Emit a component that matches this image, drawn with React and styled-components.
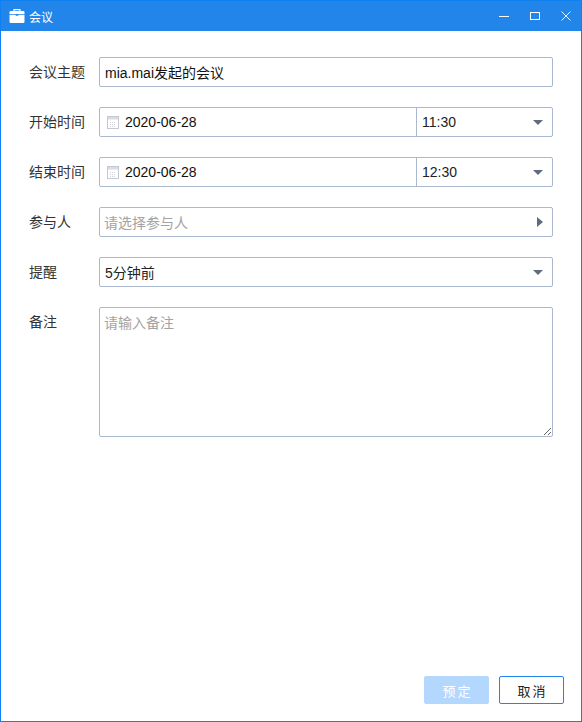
import React from "react";
import styled, { createGlobalStyle } from "styled-components";

const Global = createGlobalStyle`
  html, body { margin: 0; padding: 0; background: #fff; }
  * { box-sizing: border-box; }
  body { font-family: "Liberation Sans", "Noto Sans CJK SC", sans-serif; font-size: 14px; color: #222; }
  ::placeholder { color: #a3a3a3; opacity: 1; }
`;

const Win = styled.div`
  width: 582px; height: 722px; display: flex; flex-direction: column;
  border: 1px solid #0f80f0; background: #fff;
`;
const TitleBar = styled.header`
  height: 30px; flex: none; background: #2285ea; color: #fff;
  display: flex; align-items: center; padding-left: 8px;
`;
const TitleText = styled.span`font-size: 12px; margin-left: 4px; flex: 1;`;
const WinControls = styled.div`display: flex; align-items: center;`;
const WinBtn = styled.button`
  width: 31px; height: 30px; padding: 0; border: 0; background: none; color: #fff;
  display: flex; align-items: center; justify-content: center;
`;
const Form = styled.main`
  flex: 1; display: flex; flex-direction: column; gap: 20px; padding: 26px 28px 0 28px;
`;
const Row = styled.div`display: flex; align-items: ${p => (p.$top ? "flex-start" : "center")};`;
const Label = styled.label`
  width: 70px; flex: none; font-size: 14px; color: #333; line-height: 30px;
`;
const Field = styled.div`
  flex: 1; height: 30px; display: flex; align-items: center;
  border: 1px solid #aab8d0; border-radius: 2px; background: #fff;
`;
const Input = styled.input`
  flex: 1; min-width: 0; height: 100%; border: 0; outline: 0; padding: 0 5px; background: none;
  font: inherit; font-size: 14px; color: #111;
`;
const DatePart = styled.div`
  width: 317px; flex: none; height: 100%; display: flex; align-items: center; padding-left: 7px; gap: 6px;
  border-right: 1px solid #aab8d0;
`;
const DateValue = styled.span`font-size: 14px; color: #111;`;
const SelectPart = styled.div`
  flex: 1; height: 100%; display: flex; align-items: center; justify-content: space-between;
  padding: 0 9px 0 5px; font-size: 14px; color: #222;
`;
const Placeholder = styled.span`font-size: 14px; color: #a3a3a3; margin-left: -1px;`;
const CaretDown = styled.i`
  width: 0; height: 0; border-left: 5.5px solid transparent; border-right: 5.5px solid transparent;
  border-top: 5px solid #5f6b80;
`;
const CaretRight = styled.i`
  width: 0; height: 0; border-top: 5px solid transparent; border-bottom: 5px solid transparent;
  border-left: 6px solid #5f6b80;
`;
const Note = styled.textarea`
  flex: 1; height: 130px; display: block; resize: both; outline: 0;
  border: 1px solid #aab8d0; border-radius: 2px; padding: 5px 4px;
  font: inherit; font-size: 14px; color: #111; line-height: 20px;
`;
const Footer = styled.footer`
  flex: none; display: flex; justify-content: flex-end; gap: 10px; padding: 0 17px 17px 0;
`;
const Btn = styled.button`
  width: 65px; height: 28px; padding: 0 0 0 2px; border-radius: 2px; font: inherit; font-size: 13px; letter-spacing: 2px;
  border: 1px solid ${p => (p.$primary ? "#b3d7fd" : "#2285ea")};
  background: ${p => (p.$primary ? "#b3d7fd" : "#fff")};
  color: ${p => (p.$primary ? "#fff" : "#222")};
`;

const Briefcase = () => (
  <svg width="16" height="14" viewBox="0 0 16 14">
    <path d="M5 2V0.6h6V2" fill="none" stroke="#fff" strokeWidth="1.2" />
    <path d="M0.5 3.2A1.2 1.2 0 0 1 1.7 2h12.6a1.2 1.2 0 0 1 1.2 1.2V5H0.5z" fill="#fff" />
    <path d="M0.5 5.8h6.2v1h2.6v-1h6.2v7a1.2 1.2 0 0 1-1.2 1.2H1.7a1.2 1.2 0 0 1-1.2-1.2z" fill="#fff" />
  </svg>
);
const Calendar = () => (
  <svg width="12" height="13" viewBox="0 0 12 13">
    <rect x="0.5" y="0.5" width="11" height="12" fill="#fff" stroke="#c4c8d0" />
    <rect x="1" y="1" width="10" height="2.5" fill="#d9dce2" />
    <path d="M3 6.5h6M3 8.5h6M3 10.5h6" stroke="#cfd2d9" strokeDasharray="1 1" />
  </svg>
);

const DateTime = ({ date, time }) => (
  <Field>
    <DatePart><Calendar /><DateValue>{date}</DateValue></DatePart>
    <SelectPart>{time}<CaretDown /></SelectPart>
  </Field>
);

export default function App() {
  return (
    <>
      <Global />
      <Win>
        <TitleBar>
          <Briefcase />
          <TitleText>会议</TitleText>
          <WinControls>
            <WinBtn aria-label="最小化">
              <svg width="10" height="10" viewBox="0 0 10 10"><path d="M0 5.5h10" stroke="#fff" /></svg>
            </WinBtn>
            <WinBtn aria-label="最大化">
              <svg width="10" height="10" viewBox="0 0 10 10"><rect x="0.5" y="1.5" width="9" height="7" fill="none" stroke="#fff" /></svg>
            </WinBtn>
            <WinBtn aria-label="关闭">
              <svg width="10" height="10" viewBox="0 0 10 10"><path d="M0.5 0.5l9 9M9.5 0.5l-9 9" stroke="#fff" strokeWidth="0.9" /></svg>
            </WinBtn>
          </WinControls>
        </TitleBar>
        <Form>
          <Row><Label>会议主题</Label><Field><Input readOnly value="mia.mai发起的会议" /></Field></Row>
          <Row><Label>开始时间</Label><DateTime date="2020-06-28" time="11:30" /></Row>
          <Row><Label>结束时间</Label><DateTime date="2020-06-28" time="12:30" /></Row>
          <Row><Label>参与人</Label><Field><SelectPart><Placeholder>请选择参与人</Placeholder><CaretRight /></SelectPart></Field></Row>
          <Row><Label>提醒</Label><Field><SelectPart>5分钟前<CaretDown /></SelectPart></Field></Row>
          <Row $top><Label>备注</Label><Note placeholder="请输入备注" /></Row>
        </Form>
        <Footer>
          <Btn $primary disabled>预定</Btn>
          <Btn>取消</Btn>
        </Footer>
      </Win>
    </>
  );
}
